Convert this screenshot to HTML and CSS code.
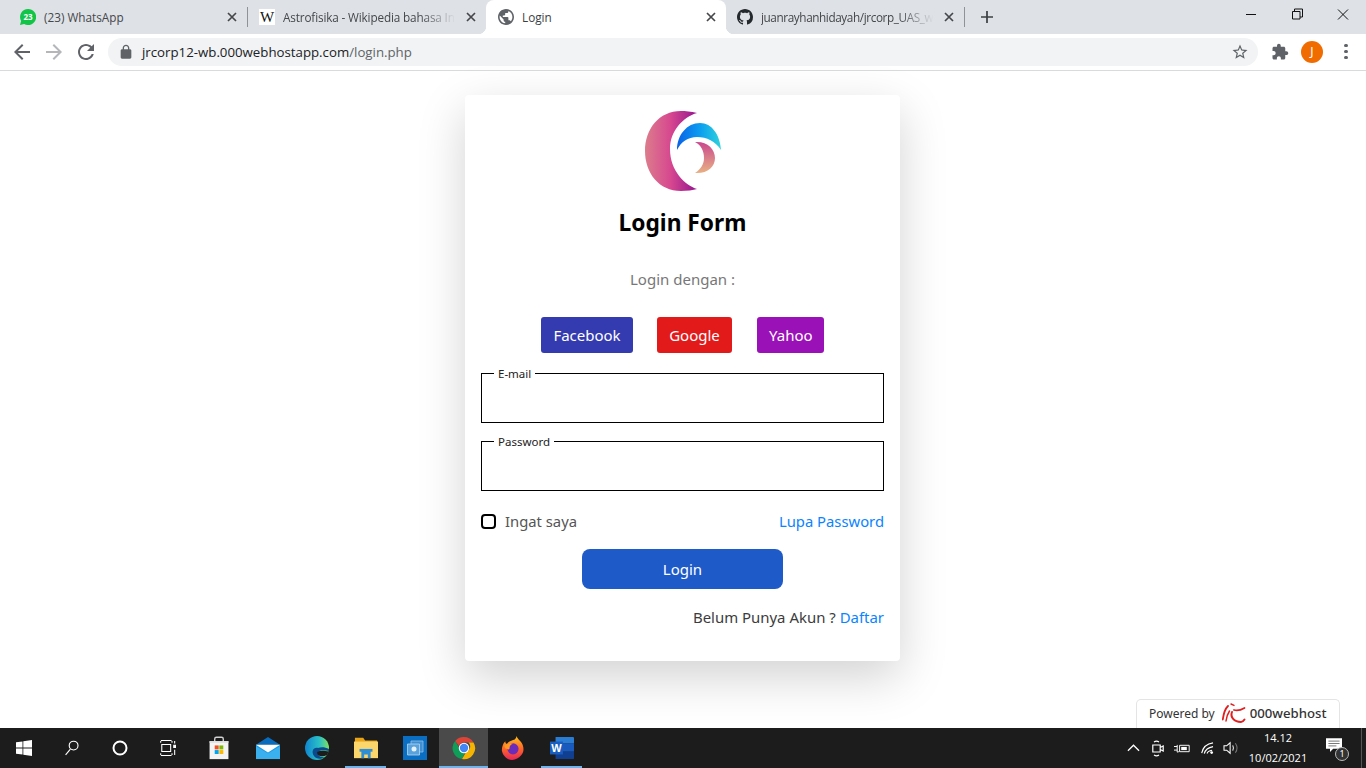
FILE: index.html
```html
<!DOCTYPE html>
<html lang="id">
<head>
    <meta charset="UTF-8">
    <meta name="viewport" content="width=device-width, initial-scale=1.0">
    <title>Login</title>
    <link rel="stylesheet" href="styles.css">
</head>
<body>

    <!-- Tab strip -->
    <div class="tabstrip">
        <div class="tab tab-sep">
            <svg class="favicon" viewBox="0 0 16 16"><path d="M8 0a8 8 0 0 0-6.900 12L0 16l4.100-1.100A8 8 0 1 0 8 0z" fill="#12c548"/><text x="8" y="11" class="wa-count">23</text></svg>
            <span class="tab-title">(23) WhatsApp</span>
            <svg class="tab-close" viewBox="0 0 16 16"><path d="M4 4l8 8M12 4l-8 8"/></svg>
        </div>
        <div class="tab">
            <span class="favicon wiki-icon">W</span>
            <span class="tab-title tab-fade">Astrofisika - Wikipedia bahasa In</span>
            <svg class="tab-close" viewBox="0 0 16 16"><path d="M4 4l8 8M12 4l-8 8"/></svg>
        </div>
        <div class="tab tab-active">
            <svg class="favicon" viewBox="2 2 20 20"><path fill="#5f6368" d="M12 2C6.480 2 2 6.480 2 12s4.480 10 10 10 10-4.480 10-10S17.520 2 12 2zm-1 17.930c-3.950-.49-7-3.850-7-7.930 0-.62.08-1.210.21-1.790L9 15v1c0 1.100.9 2 2 2v1.930zm6.900-2.540c-.26-.81-1-1.390-1.900-1.390h-1v-3c0-.55-.45-1-1-1H8v-2h2c.55 0 1-.45 1-1V7h2c1.100 0 2-.9 2-2v-.41c2.930 1.190 5 4.060 5 7.410 0 2.080-.8 3.970-2.100 5.390z"/></svg>
            <span class="tab-title">Login</span>
            <svg class="tab-close" viewBox="0 0 16 16"><path d="M4 4l8 8M12 4l-8 8"/></svg>
        </div>
        <div class="tab tab-sep">
            <svg class="favicon" viewBox="0 0 16 16"><path fill="#24292e" d="M8 0C3.580 0 0 3.580 0 8c0 3.540 2.290 6.530 5.470 7.590.4.07.55-.17.55-.38 0-.19-.01-.82-.01-1.490-2.010.37-2.530-.49-2.690-.94-.09-.23-.48-.94-.82-1.130-.28-.15-.68-.52-.01-.53.63-.01 1.080.58 1.230.82.72 1.210 1.870.87 2.330.66.07-.52.28-.87.51-1.070-1.780-.2-3.640-.89-3.640-3.950 0-.87.31-1.590.82-2.150-.08-.2-.36-1.020.08-2.120 0 0 .67-.21 2.200.82.64-.18 1.320-.27 2-.27.68 0 1.360.09 2 .27 1.530-1.040 2.200-.82 2.200-.82.44 1.100.16 1.920.08 2.120.51.56.82 1.270.82 2.150 0 3.070-1.870 3.750-3.650 3.950.29.25.54.73.54 1.480 0 1.070-.01 1.930-.01 2.200 0 .21.15.46.55.38A8.013 8.013 0 0 0 16 8c0-4.420-3.580-8-8-8z"/></svg>
            <span class="tab-title tab-fade tab-narrow">juanrayhanhidayah/jrcorp_UAS_w</span>
            <svg class="tab-close" viewBox="0 0 16 16"><path d="M4 4l8 8M12 4l-8 8"/></svg>
        </div>
        <svg class="new-tab" viewBox="0 0 14 14"><path d="M7 0v14M0 7h14"/></svg>
        <div class="win-controls">
            <svg class="win-btn" viewBox="0 0 46 28"><path d="M18 14.500h10"/></svg>
            <svg class="win-btn" viewBox="0 0 46 28"><path d="M18.500 11.500h7.500v7.500h-7.500zM20.500 11.500v-2.500h8v8h-2.500"/></svg>
            <svg class="win-btn" viewBox="0 0 46 28"><path d="M18 9.500l10 10M28 9.500l-10 10"/></svg>
        </div>
    </div>

    <!-- Toolbar -->
    <div class="toolbar">
        <svg class="nav-icon" viewBox="0 0 24 24"><path fill="#5f6368" d="M20 11H7.830l5.590-5.590L12 4l-8 8 8 8 1.410-1.410L7.830 13H20v-2z"/></svg>
        <svg class="nav-icon" viewBox="0 0 24 24"><path fill="#b4b6b9" d="M4 11h12.170l-5.590-5.590L12 4l8 8-8 8-1.410-1.410L16.170 13H4v-2z"/></svg>
        <svg class="nav-icon" viewBox="0 0 24 24"><path fill="#5f6368" d="M17.650 6.350C16.200 4.900 14.210 4 12 4c-4.420 0-7.990 3.580-7.990 8s3.570 8 7.990 8c3.730 0 6.840-2.550 7.730-6h-2.080c-.82 2.330-3.040 4-5.650 4-3.310 0-6-2.690-6-6s2.690-6 6-6c1.660 0 3.140.69 4.220 1.780L13 11h7V4l-2.350 2.350z"/></svg>
        <div class="omnibox">
            <svg class="lock-icon" viewBox="0 0 24 24"><path fill="#5f6368" d="M18 8h-1V6c0-2.760-2.240-5-5-5S7 3.240 7 6v2H6c-1.100 0-2 .9-2 2v10c0 1.100.9 2 2 2h12c1.100 0 2-.9 2-2V10c0-1.100-.9-2-2-2zM9 6c0-1.660 1.340-3 3-3s3 1.340 3 3v2H9V6z"/></svg>
            <span class="url">jrcorp12-wb.000webhostapp.com<span class="url-path">/login.php</span></span>
            <svg class="star-icon" viewBox="0 0 24 24"><path fill="#5f6368" d="M22 9.240l-7.190-.62L12 2 9.190 8.630 2 9.240l5.460 4.730L5.820 21 12 17.270 18.180 21l-1.630-7.030L22 9.240zM12 15.400l-3.760 2.270 1-4.280-3.320-2.880 4.380-.38L12 6.100l1.710 4.040 4.380.38-3.320 2.880 1 4.280L12 15.400z"/></svg>
        </div>
        <svg class="ext-icon" viewBox="0 0 24 24"><path fill="#5f6368" d="M20.500 11H19V7c0-1.100-.9-2-2-2h-4V3.500C13 2.120 11.880 1 10.500 1S8 2.120 8 3.500V5H4c-1.100 0-1.990.9-1.990 2v3.800H3.500c1.490 0 2.700 1.210 2.700 2.700s-1.210 2.700-2.700 2.700H2V20c0 1.100.9 2 2 2h3.800v-1.500c0-1.490 1.210-2.700 2.700-2.700 1.490 0 2.700 1.210 2.700 2.700V22H17c1.100 0 2-.9 2-2v-4h1.500c1.380 0 2.500-1.120 2.500-2.500S21.880 11 20.500 11z"/></svg>
        <div class="avatar">J</div>
        <div class="menu-dots"><i></i><i></i><i></i></div>
    </div>

    <!-- Page -->
    <div class="page">
        <div class="card">
            <svg class="logo" viewBox="0 0 80 80">
                <defs>
                    <linearGradient id="lg-moon" x1="0" y1="0" x2="1" y2="0">
                        <stop offset="0" stop-color="#dc7d8c"/>
                        <stop offset="0.5" stop-color="#d6478f"/>
                        <stop offset="1" stop-color="#95158f"/>
                    </linearGradient>
                    <linearGradient id="lg-wave" x1="0" y1="0" x2="1" y2="0">
                        <stop offset="0" stop-color="#0a62e6"/>
                        <stop offset="0.5" stop-color="#0a9bf0"/>
                        <stop offset="1" stop-color="#2ed3dc"/>
                    </linearGradient>
                    <linearGradient id="lg-small" x1="0" y1="0" x2="0" y2="1">
                        <stop offset="0" stop-color="#c9488f"/>
                        <stop offset="1" stop-color="#e8b184"/>
                    </linearGradient>
                </defs>
                <path fill="url(#lg-moon)" d="M52 2C46 .5 40 0 36 0C14 0 0 18 0 40C0 62 14 80 36 80C42 80 48 79 52 78C40 74 25 60 25 38C25 20 38 6 52 2Z"/>
                <path fill="url(#lg-wave)" d="M32 39C32 24 42 12 55 12C67 12 75 24 76 39C70 30 62 26 52 26C43 26 36 31 32 39Z"/>
                <path fill="url(#lg-small)" d="M50 31C62 30 70 38 70 47C70 56 62 63 50 62C56 58 59 53 59 47C59 40 56 34 50 31Z"/>
            </svg>
            <h2 class="card-title">Login Form</h2>
            <p class="card-sub">Login dengan :</p>
            <div class="social">
                <a class="social-btn btn-fb">Facebook</a>
                <a class="social-btn btn-google">Google</a>
                <a class="social-btn btn-yahoo">Yahoo</a>
            </div>
            <form class="login-form">
                <fieldset class="field">
                    <legend>E-mail</legend>
                    <input type="text">
                </fieldset>
                <fieldset class="field">
                    <legend>Password</legend>
                    <input type="password">
                </fieldset>
                <div class="form-row">
                    <label class="remember"><span class="check"></span>Ingat saya</label>
                    <a class="link">Lupa Password</a>
                </div>
                <button type="button" class="login-btn">Login</button>
                <p class="signup">Belum Punya Akun ? <a class="link">Daftar</a></p>
            </form>
        </div>

        <div class="powered">
            <span class="powered-text">Powered by</span>
            <svg class="powered-logo" viewBox="0 0 24 20" fill="none" stroke="#e02020" stroke-linecap="round">
                <path stroke-width="1.400" d="M9 1l3 1.400"/>
                <path stroke-width="1.800" d="M6 3C3 6 1.500 11 .8 16.500"/>
                <path stroke-width="1.500" d="M7.500 8C5.500 11 4.500 14 4 18"/>
                <path stroke-width="2" d="M10 9C8 14 12 19 19 19C20.500 19 21.500 18 22.500 16.500"/>
                <path stroke-width="1.800" d="M12 7C15 8 19 7 22.500 5"/>
            </svg>
            <span class="powered-name">000webhost</span>
        </div>
    </div>

    <!-- Windows taskbar -->
    <div class="taskbar">
        <div class="task-btn">
            <svg viewBox="0 0 16 16" class="task-icon-sm"><path fill="#fff" d="M0 2.300l6.500-.9v6.200H0zM7.300 1.300L16 0v7.600H7.300zM0 8.400h6.500v6.200L0 13.700zM7.300 8.400H16V16l-8.700-1.300z"/></svg>
        </div>
        <div class="task-btn">
            <svg viewBox="0 0 18 20" class="task-icon-sm" fill="none" stroke="#fff" stroke-width="1.400"><circle cx="11" cy="7" r="5.500"/><path d="M7 11.500L1 18.500"/></svg>
        </div>
        <div class="task-btn">
            <svg viewBox="0 0 16 16" class="task-icon-sm" fill="none" stroke="#fff" stroke-width="2"><circle cx="8" cy="8" r="6.500"/></svg>
        </div>
        <div class="task-btn task-view">
            <svg viewBox="0 0 18 18" class="task-icon-sm" fill="none" stroke="#fff" stroke-width="1.200"><path d="M1 .6h12M1 17.400h12M2 5h10v8H2zM.8 1v2M13.500 1v2M.8 15v2M13.500 15v2"/><path fill="#fff" d="M15.500 6h2v2.500h-2z"/><path d="M16.500 1v3M16.500 11v6"/></svg>
        </div>
        <div class="task-btn task-app">
            <svg viewBox="0 0 24 28" class="task-icon"><path d="M7 7V3.500A2 2 0 0 1 9 1.500h6a2 2 0 0 1 2 2V7" fill="none" stroke="#d2d2d2" stroke-width="1.600"/><path fill="#f3f3f3" d="M1 6h22v21H1z"/><path fill="#e0e0e0" d="M1 6h22v2H1z"/><path fill="#f25022" d="M7 11h4.600v4.600H7z"/><path fill="#7fba00" d="M12.400 11H17v4.600h-4.600z"/><path fill="#00a4ef" d="M7 16.400h4.600V21H7z"/><path fill="#ffb900" d="M12.400 16.400H17V21h-4.600z"/></svg>
        </div>
        <div class="task-btn task-app">
            <svg viewBox="0 0 26 26" class="task-icon"><path fill="#0a6cbd" d="M13 1L0 9.500h26z"/><path fill="#1c9ae6" d="M0 9.500h26V25H0z"/><path fill="#fff" d="M0 9.500h26L13 18z"/><path fill="#4fc0f5" d="M0 25V11l13 8 13-8v14z" opacity=".6"/></svg>
        </div>
        <div class="task-btn task-app">
            <svg viewBox="0 0 24 24" class="task-icon">
                <defs>
                    <linearGradient id="lg-edge" x1="0" y1="0" x2="1" y2="0">
                        <stop offset="0" stop-color="#0f86d2"/>
                        <stop offset="0.6" stop-color="#2bc0c6"/>
                        <stop offset="1" stop-color="#7ee05f"/>
                    </linearGradient>
                </defs>
                <circle cx="12" cy="12" r="12" fill="url(#lg-edge)"/>
                <path fill="#0b4a8c" d="M13 12C8 11 6 16 9 20C11 23 16 24 20 21C15 22 12 19 13 16C14 14 19 14 24 15L24 13C20 11 16 11 13 12Z"/>
                <path fill="#1c1c1c" d="M12 17C12 15 16 14 24 15.500L22 19C18 21 13 21 12 17Z"/>
            </svg>
        </div>
        <div class="task-btn task-app task-open">
            <svg viewBox="0 0 26 24" class="task-icon"><path fill="#e8a317" d="M1 1h9l2 3h13v4H1z"/><path fill="#fcd56b" d="M0 5h26v18H0z"/><path fill="#2e8fd6" d="M8 15h10v8h-3v-4h-4v4H8z"/><path fill="#2e8fd6" d="M6 13h14v3H6z"/></svg>
        </div>
        <div class="task-btn task-app">
            <svg viewBox="0 0 24 24" class="task-icon"><path fill="#0a6fc2" d="M0 0h24v24H0z"/><path fill="#3f8fd2" stroke="#8fc0e8" stroke-width=".8" d="M8 5h12v11H8z"/><path fill="#5aa2dc" stroke="#b5d6f0" stroke-width=".8" d="M4.500 8h12v11h-12z"/><circle cx="11" cy="13" r="2.500" fill="#e6f2fb"/></svg>
        </div>
        <div class="task-btn task-app task-active">
            <svg viewBox="0 0 48 48" class="task-icon">
                <path fill="#db4437" d="M24 2a22 22 0 0 1 19 11H24a11 11 0 0 0-10.300 7L6.300 10A22 22 0 0 1 24 2z"/>
                <path fill="#0f9d58" d="M6.300 10l9.300 16a9 9 0 0 0 11 6.700L20 46A22 22 0 0 1 6.300 10z"/>
                <path fill="#f4b400" d="M43 13a22 22 0 0 1-23 33l8.500-14.500A11 11 0 0 0 33 13z"/>
                <circle cx="24" cy="24" r="10.500" fill="#fff"/>
                <circle cx="24" cy="24" r="8.300" fill="#4285f4"/>
            </svg>
        </div>
        <div class="task-btn task-app">
            <svg viewBox="0 0 26 28" class="task-icon">
                <defs>
                    <linearGradient id="lg-fox" x1="0" y1="0" x2="0" y2="1">
                        <stop offset="0" stop-color="#ffc31f"/>
                        <stop offset="0.5" stop-color="#ff6a25"/>
                        <stop offset="1" stop-color="#e6255c"/>
                    </linearGradient>
                </defs>
                <path fill="url(#lg-fox)" d="M17 0c1 3 4 5 6 8 3 5 3 10 0 14-3 4-7 6-11 6-6 0-11-5-12-11C0 13 1 9 4 6c0 2 1 3 2 3 2-3 6-4 9-5 1-1 2-2 2-4z"/>
                <circle cx="13" cy="15" r="6.500" fill="#6c2bb8"/>
                <path fill="#ff9a22" d="M3 11c3-2 7-3 10-2-3 1-4 3-4 5s-1 2-3 1c-2 0-3-2-3-4z"/>
            </svg>
        </div>
        <div class="task-btn task-app task-open">
            <svg viewBox="0 0 26 26" class="task-icon"><path fill="#2b7cd3" d="M6 1h19a1 1 0 0 1 1 1v6H6z"/><path fill="#185abd" d="M6 8h20v9H6z"/><path fill="#103f91" d="M6 17h20v7a1 1 0 0 1-1 1H6z"/><path fill="#1a5dc0" d="M0 6h14v14H0z"/><text x="7" y="17" class="word-letter">W</text></svg>
        </div>

        <div class="tray">
            <svg class="tray-icon tray-chevron" viewBox="0 0 14 8"><path d="M1 7l6-6 6 6"/></svg>
            <svg class="tray-icon tray-meet" viewBox="0 0 12 17"><path d="M.8 5h7.400v7H.8zM8.200 7.500l3-1.500v5l-3-1.500M2 2c1.500-1 3.500-1 5 0M2 15c1.500 1 3.500 1 5 0"/></svg>
            <svg class="tray-icon tray-battery" viewBox="0 0 20 13"><path d="M7 2.500h12v8H7z"/><path class="tray-fill" d="M9 4.500h7v4H9z"/><path d="M0 4h4M0 8.500h4M4 2v9c1 0 2-.5 3-1.500"/></svg>
            <svg class="tray-icon tray-wifi" viewBox="0 0 14 13"><path d="M.7 12C2 6 6 2 13 1M3.500 12.500C4.500 8.500 7.500 6 13 5M6.500 12.500C7 11 9 9.500 12 9"/><circle class="tray-fill" cx="11.500" cy="11.500" r="1.500"/></svg>
            <svg class="tray-icon tray-volume" viewBox="0 0 18 16"><path d="M1 5.500h3L8 2v12L4 10.500H1zM11 5c1 2 1 4 0 6"/><path class="tray-faint" d="M14 2.500c2.200 3.200 2.200 7.800 0 11"/></svg>
            <div class="clock"><span>14.12</span><span>10/02/2021</span></div>
            <div class="notify">
                <svg viewBox="0 0 20 18" class="notify-icon"><path fill="#fff" d="M0 0h20v13H9l-4 4v-4H0z"/><path stroke="#555" d="M3 3.500h14M3 6.500h14M3 9.500h10"/></svg>
                <span class="notify-count">1</span>
            </div>
            <div class="show-desktop"></div>
        </div>
    </div>

</body>
</html>
```

FILE: styles.css
```css
* {
    box-sizing: border-box;
}
body {
    margin: 0;
    height: 768px;
    display: flex;
    flex-direction: column;
    overflow: hidden;
    background-color: #fff;
    font-family: "Noto Sans", sans-serif;
}

/* tab strip */
.tabstrip {
    height: 34px;
    flex: none;
    display: flex;
    padding-left: 8px;
    background-color: #dee1e6;
}
.tab {
    position: relative;
    width: 239px;
    flex: none;
    display: flex;
    align-items: center;
    padding: 0 7px 0 12px;
    font-family: "Open Sans", sans-serif;
    font-size: 11.750px;
    color: #45474a;
}
.tab-sep::after {
    content: "";
    position: absolute;
    right: -1px;
    top: 7px;
    height: 20px;
    width: 1px;
    background-color: #8f9296;
}
.tab-active {
    width: 240px;
    background-color: #fff;
    border-radius: 8px 8px 0 0;
    color: #3c4043;
}
.tab-active + .tab {
    width: 238px;
    padding-left: 11px;
}
.tab-active::before,
.tab-active::after {
    content: "";
    position: absolute;
    bottom: 0;
    width: 8px;
    height: 8px;
}
.tab-active::before {
    left: -8px;
    background: radial-gradient(circle at 0 0, #dee1e6 8px, #fff 8.500px);
}
.tab-active::after {
    right: -8px;
    background: radial-gradient(circle at 100% 0, #dee1e6 8px, #fff 8.500px);
}
.favicon {
    width: 16px;
    height: 16px;
    flex: none;
    margin-right: 8px;
}
.wa-count {
    font-family: "Open Sans", sans-serif;
    font-size: 8px;
    font-weight: 700;
    fill: #fff;
    text-anchor: middle;
}
.wiki-icon {
    display: block;
    background-color: #fff;
    color: #111;
    font-family: "Liberation Serif", serif;
    font-size: 15px;
    line-height: 16px;
    text-align: center;
}
.tab-title {
    flex: 1;
    min-width: 0;
    white-space: nowrap;
    overflow: hidden;
}
.tab-fade {
    letter-spacing: -0.150px;
    -webkit-mask-image: linear-gradient(to right, #000 78%, transparent 98%);
    mask-image: linear-gradient(to right, #000 78%, transparent 98%);
}
.tab-narrow {
    letter-spacing: -0.400px;
}
.tab-close {
    width: 16px;
    height: 16px;
    flex: none;
    margin-left: 4px;
    fill: none;
    stroke: #45474a;
    stroke-width: 1.700;
}
.new-tab {
    width: 12px;
    height: 12px;
    flex: none;
    margin: 11px 0 0 17px;
    fill: none;
    stroke: #3c4043;
    stroke-width: 2;
}
.win-controls {
    margin-left: auto;
    display: flex;
}
.win-btn {
    width: 46px;
    height: 28px;
    fill: none;
    stroke: #111;
    stroke-width: 1;
}

/* toolbar */
.toolbar {
    height: 37px;
    flex: none;
    display: flex;
    align-items: center;
    padding: 0 0 1px 6px;
    background-color: #fff;
    border-bottom: 1px solid #d9dadc;
}
.nav-icon {
    width: 24px;
    height: 24px;
    flex: none;
    margin: 0 4px;
}
.omnibox {
    width: 1150px;
    height: 28px;
    flex: none;
    margin-left: 6px;
    display: flex;
    align-items: center;
    padding: 0 9px 0 10px;
    background-color: #f1f3f4;
    border-radius: 14px;
}
.lock-icon {
    width: 16px;
    height: 16px;
    margin-right: 8px;
}
.url {
    font-family: "Open Sans", sans-serif;
    font-size: 13.250px;
    color: #202124;
}
.url-path {
    color: #5f6368;
}
.star-icon {
    width: 18px;
    height: 18px;
    margin-left: auto;
}
.ext-icon {
    width: 18px;
    height: 18px;
    flex: none;
    margin-left: 13px;
}
.avatar {
    width: 22px;
    height: 22px;
    flex: none;
    margin-left: 12px;
    border-radius: 50%;
    background-color: #f06c00;
    color: #fff;
    font-size: 12px;
    line-height: 22px;
    text-align: center;
}
.menu-dots {
    margin-left: 21px;
    display: flex;
    flex-direction: column;
    gap: 2.500px;
}
.menu-dots i {
    width: 3.500px;
    height: 3.500px;
    border-radius: 50%;
    background-color: #5f6368;
}

/* login card */
.page {
    position: relative;
    flex: 1;
    min-height: 0;
    padding-top: 24px;
}
.card {
    width: 435px;
    height: 566px;
    margin-left: 465px;
    padding: 16px 16px 0;
    background-color: #fff;
    border-radius: 4px;
    box-shadow: 0 16px 48px rgba(0, 0, 0, 0.18);
    text-align: center;
}
.logo {
    display: block;
    width: 80px;
    height: 80px;
    margin: 0 0 0 164px;
}
.card-title {
    margin: 16px 0 0;
    font-size: 22.750px;
    font-weight: 700;
    line-height: 32px;
    color: #000;
}
.card-sub {
    margin: 28px 0 0;
    font-size: 15px;
    line-height: 24px;
    color: #777;
}
.social {
    display: flex;
    justify-content: center;
    gap: 24px;
    margin-top: 26px;
}
.social-btn {
    height: 36px;
    padding: 0 12px;
    border-radius: 3px;
    color: #fff;
    font-size: 15px;
    line-height: 36px;
}
.btn-fb {
    width: 92px;
    background-color: #343ab0;
}
.btn-google {
    width: 75px;
    background-color: #e31a1a;
}
.btn-yahoo {
    width: 67px;
    margin-left: 1px;
    background-color: #9b11b8;
}

.login-form {
    margin-top: 12px;
}
.field {
    height: 58px;
    margin: 0 0 10px;
    padding: 0;
    border: 1px solid #000;
    text-align: left;
}
.field legend {
    margin-left: 12px;
    padding: 2px 4px 0;
    font-size: 11.500px;
    line-height: 14px;
    color: #222;
}
.field input {
    display: block;
    width: 100%;
    height: 40px;
    border: none;
    outline: none;
    background: transparent;
}
.form-row {
    display: flex;
    justify-content: space-between;
    align-items: center;
    margin-top: 18px;
    height: 24px;
    font-size: 14.800px;
}
.remember {
    display: flex;
    align-items: center;
    color: #555;
}
.check {
    width: 15px;
    height: 15px;
    margin-right: 9px;
    border: 2px solid #000;
    border-radius: 4px;
}
.link {
    color: #0a84ff;
}
.login-btn {
    display: block;
    width: 201px;
    height: 40px;
    margin: 16px auto 0;
    border: none;
    border-radius: 8px;
    background-color: #1e5ac8;
    color: #fff;
    font-family: "Noto Sans", sans-serif;
    font-size: 15px;
}
.signup {
    margin: 16px 0 0;
    font-size: 14.950px;
    line-height: 24px;
    color: #3c3c3c;
    text-align: right;
}

/* badge */
.powered {
    position: absolute;
    right: 26px;
    bottom: 0;
    width: 204px;
    height: 29px;
    display: flex;
    align-items: center;
    padding: 0 0 2px 12px;
    background-color: #fff;
    border: 1px solid #e4e4e4;
    border-bottom: none;
    border-radius: 5px 5px 0 0;
    color: #333;
}
.powered-text {
    font-size: 12px;
    margin-right: 7px;
}
.powered-logo {
    width: 24px;
    height: 20px;
    margin-right: 4px;
}
.powered-name {
    font-size: 13.200px;
    font-weight: 500;
}

/* taskbar */
.taskbar {
    height: 40px;
    flex: none;
    display: flex;
    background-color: #1c1c1c;
    color: #fff;
}
.task-btn {
    position: relative;
    width: 48px;
    flex: none;
    display: flex;
    align-items: center;
    justify-content: center;
}
.task-view {
    margin-right: 2px;
}
.task-app {
    width: 49px;
}
.task-icon-sm {
    width: 16px;
    height: 16px;
}
.task-icon {
    width: 24px;
    height: 24px;
}
.task-open::after,
.task-active::after {
    content: "";
    position: absolute;
    bottom: 0;
    height: 2px;
    background-color: #6cb4ee;
}
.task-open::after {
    left: 4px;
    right: 4px;
}
.task-active {
    background-color: #4a4a4a;
}
.task-active::after {
    left: 0;
    right: 0;
}
.word-letter {
    font-family: "Liberation Sans", sans-serif;
    font-size: 12px;
    font-weight: 700;
    fill: #fff;
    text-anchor: middle;
}
.tray {
    margin-left: auto;
    display: flex;
    align-items: center;
}
.tray-icon {
    flex: none;
    fill: none;
    stroke: #fff;
    stroke-width: 1.200;
}
.tray-fill {
    fill: #fff;
    stroke: none;
}
.tray-faint {
    stroke: #777;
}
.tray-chevron {
    width: 13px;
    height: 8px;
    margin-right: 12px;
    stroke-width: 1.400;
}
.tray-meet {
    width: 12px;
    height: 17px;
    margin-right: 10px;
}
.tray-battery {
    width: 16px;
    height: 11px;
    margin-right: 11px;
}
.tray-wifi {
    width: 13px;
    height: 12px;
    margin-right: 9px;
}
.tray-volume {
    width: 16px;
    height: 14px;
    margin-right: 3px;
}
.clock {
    width: 72px;
    display: flex;
    flex-direction: column;
    align-items: center;
    font-family: "Open Sans", sans-serif;
    font-size: 11px;
    line-height: 20px;
    margin-right: 12px;
}
.notify {
    position: relative;
    width: 20px;
    height: 20px;
    margin-right: 15px;
}
.notify-icon {
    width: 16px;
    height: 15px;
    display: block;
}
.notify-count {
    position: absolute;
    right: -3px;
    bottom: -3px;
    width: 14px;
    height: 14px;
    border: 1px solid #bbb;
    border-radius: 50%;
    background-color: #333;
    font-size: 9px;
    line-height: 12px;
    text-align: center;
}
.show-desktop {
    width: 1px;
    height: 40px;
    margin-right: 4px;
    background-color: #555;
}
```
